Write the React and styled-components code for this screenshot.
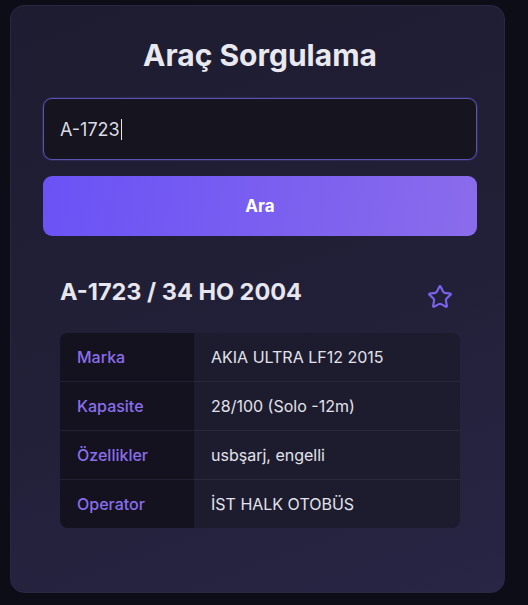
import React from "react";
import styled, { createGlobalStyle } from "styled-components";

const Global = createGlobalStyle`
  html, body { margin: 0; padding: 0; background: #0d0d17; }
  body { font-family: Inter, "Noto Sans", sans-serif; }
  * { box-sizing: border-box; }
`;

const Page = styled.div`
  padding: 5px 23px 12px 10px;
  min-height: 605px;
`;

const Card = styled.div`
  width: 495px;
  border-radius: 14px;
  background: linear-gradient(160deg, #1d1c30 0%, #222038 55%, #282545 100%);
  border: 1px solid #2a2840;
  padding: 31px 27px 32px 32px;
  display: flex;
  flex-direction: column;
`;

const Title = styled.h1`
  margin: 0 0 25px;
  text-align: center;
  font-size: 30px;
  font-weight: 700;
  line-height: 36px;
  color: #e9e8ef;
`;

const Input = styled.div`
  height: 62px;
  border: 1px solid #5c52b0;
  border-radius: 9px;
  background: #15141f;
  box-shadow: 0 0 0 1px rgba(110, 95, 220, 0.18);
  display: flex;
  align-items: center;
  padding: 0 16px;
  font-size: 18px;
  color: #dcdce4;
`;

const Caret = styled.span`
  display: inline-block;
  width: 1px;
  height: 21px;
  background: #e6e6ee;
  margin-left: 1px;
`;

const Button = styled.button`
  margin-top: 16px;
  height: 60px;
  border: none;
  border-radius: 9px;
  background: linear-gradient(100deg, #6a52f6 0%, #7b60f0 55%, #8a6ceb 100%);
  color: #fff;
  font-family: inherit;
  font-size: 17px;
  font-weight: 700;
`;

const Result = styled.section`
  margin-top: 24px;
  padding: 17px 17px 32px;
`;

const ResultHead = styled.div`
  display: flex;
  justify-content: space-between;
  align-items: flex-start;
  margin-bottom: 23px;
`;

const Plate = styled.h2`
  margin: 0;
  font-size: 23.5px;
  font-weight: 700;
  line-height: 29px;
  color: #e7e6ee;
`;

const Star = styled.svg`
  margin-top: 7px;
  margin-right: 7px;
  width: 26px;
  height: 26px;
  color: #7a62ea;
`;

const Table = styled.div`
  border-radius: 8px;
  overflow: hidden;
  background: #1d1c2f;
  display: grid;
  grid-template-columns: 134px 1fr;
`;

const Label = styled.div`
  background: #13121e;
  height: ${p => (p.$last ? 48 : 49)}px;
  padding: 0 17px;
  display: flex;
  align-items: center;
  font-size: 16px;
  font-weight: 500;
  color: #8a6eec;
  border-bottom: ${p => (p.$last ? "none" : "1px solid #222133")};
`;

const Value = styled.div`
  height: ${p => (p.$last ? 48 : 49)}px;
  padding: 0 17px;
  display: flex;
  align-items: center;
  font-size: 16px;
  color: #e3e2ea;
  border-bottom: ${p => (p.$last ? "none" : "1px solid #2a293c")};
`;

const rows = [
  ["Marka", "AKIA ULTRA LF12 2015"],
  ["Kapasite", "28/100 (Solo -12m)"],
  ["Özellikler", "usbşarj, engelli"],
  ["Operator", "İST HALK OTOBÜS"],
];

export default function App() {
  return (
    <>
      <Global />
      <Page>
        <Card>
          <Title>Araç Sorgulama</Title>
          <Input>
            A-1723<Caret />
          </Input>
          <Button>Ara</Button>
          <Result>
            <ResultHead>
              <Plate>A-1723 / 34 HO 2004</Plate>
              <Star viewBox="0 0 24 24" fill="none" stroke="currentColor" strokeWidth="2" strokeLinejoin="round" strokeLinecap="round">
                <path d="M11.525 2.295a.53.53 0 0 1 .95 0l2.31 4.679a2.123 2.123 0 0 0 1.595 1.16l5.166.756a.53.53 0 0 1 .294.904l-3.736 3.638a2.123 2.123 0 0 0-.611 1.878l.882 5.14a.53.53 0 0 1-.771.56l-4.618-2.428a2.122 2.122 0 0 0-1.973 0L6.396 21.01a.53.53 0 0 1-.77-.56l.881-5.139a2.122 2.122 0 0 0-.611-1.879L2.16 9.795a.53.53 0 0 1 .294-.906l5.165-.755a2.122 2.122 0 0 0 1.597-1.16z" />
              </Star>
            </ResultHead>
            <Table>
              {rows.map(([k, v], i) => (
                <React.Fragment key={k}>
                  <Label $last={i === rows.length - 1}>{k}</Label>
                  <Value $last={i === rows.length - 1}>{v}</Value>
                </React.Fragment>
              ))}
            </Table>
          </Result>
        </Card>
      </Page>
    </>
  );
}
